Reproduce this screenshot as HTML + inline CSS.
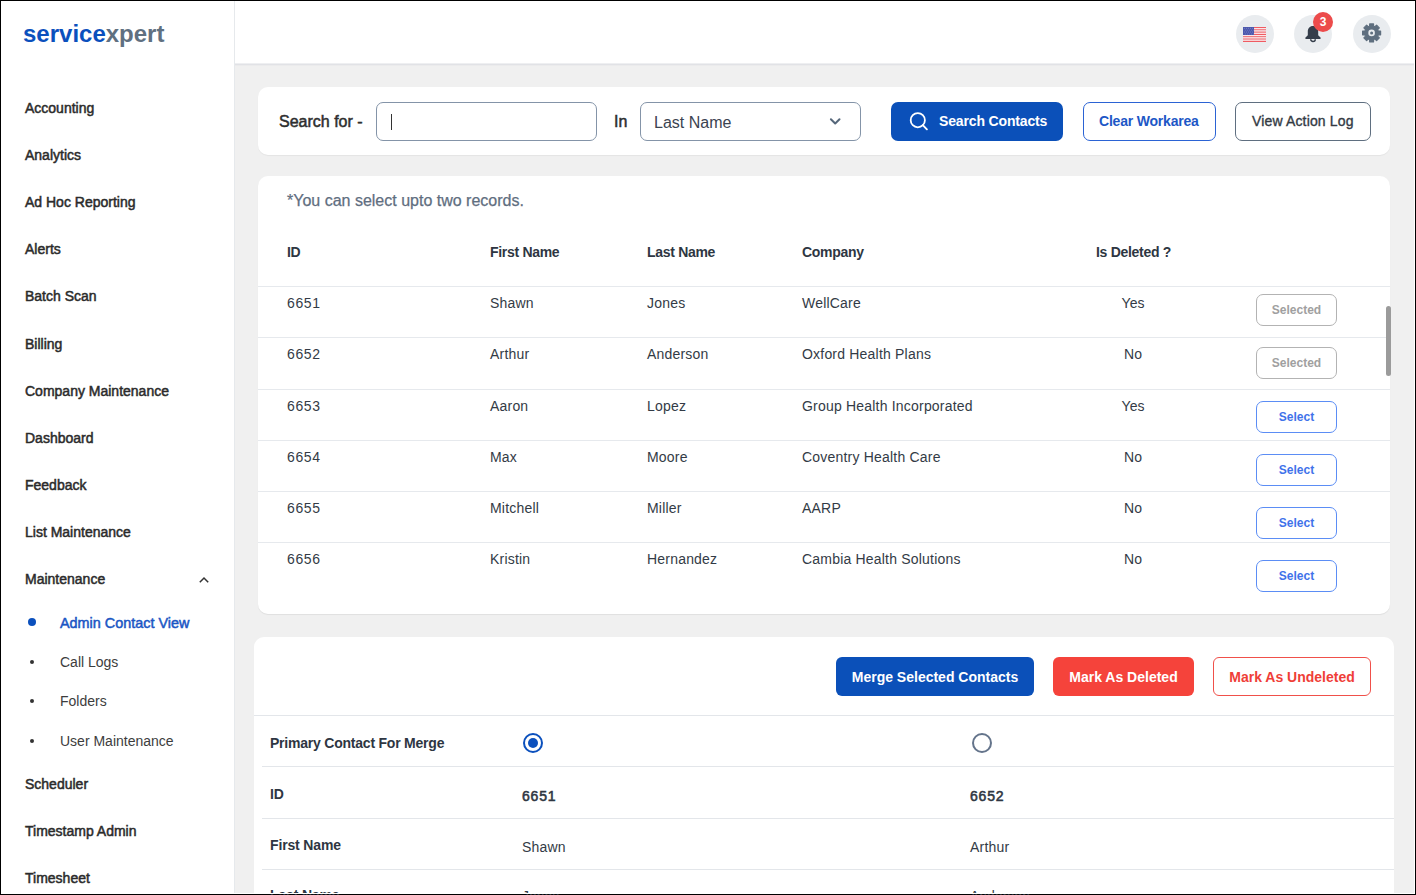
<!DOCTYPE html>
<html><head><meta charset="utf-8"><title>servicexpert</title>
<style>
html,body{margin:0;padding:0;}
body{width:1416px;height:895px;overflow:hidden;position:relative;background:#000;font-family:"Liberation Sans",sans-serif;}
.t{position:absolute;white-space:nowrap;line-height:1;font-family:"Liberation Sans",sans-serif;}
.r{position:absolute;}
</style></head><body>
<div class="r" style="left:1px;top:1px;width:1414px;height:893px;background:#fff;"></div>
<div class="r" style="left:235px;top:65px;width:1179px;height:828px;background:#f0f0f0;"></div>
<div class="r" style="left:234px;top:1px;width:1px;height:892px;background:#e6e9ec;"></div>
<div class="r" style="left:235px;top:63px;width:1179px;height:1px;background:#eeeff1;"></div>
<div class="r" style="left:235px;top:64px;width:1179px;height:1px;background:#e1e2e6;"></div>
<div class="r" style="left:235px;top:65px;width:1179px;height:1px;background:#ebebec;"></div>
<div class="t" style="left:23px;top:22px;font-size:24px;font-weight:bold;letter-spacing:0px"><span style="color:#0b50bd">service</span><span style="color:#5f7081">xpert</span></div>
<div class="t" style="left:25px;top:101px;font-size:14px;font-weight:normal;color:#2b2b2b;-webkit-text-stroke:0.5px #2b2b2b;">Accounting</div>
<div class="t" style="left:25px;top:148px;font-size:14px;font-weight:normal;color:#2b2b2b;-webkit-text-stroke:0.5px #2b2b2b;">Analytics</div>
<div class="t" style="left:25px;top:195px;font-size:14px;font-weight:normal;color:#2b2b2b;-webkit-text-stroke:0.5px #2b2b2b;">Ad Hoc Reporting</div>
<div class="t" style="left:25px;top:242px;font-size:14px;font-weight:normal;color:#2b2b2b;-webkit-text-stroke:0.5px #2b2b2b;">Alerts</div>
<div class="t" style="left:25px;top:289px;font-size:14px;font-weight:normal;color:#2b2b2b;-webkit-text-stroke:0.5px #2b2b2b;">Batch Scan</div>
<div class="t" style="left:25px;top:337px;font-size:14px;font-weight:normal;color:#2b2b2b;-webkit-text-stroke:0.5px #2b2b2b;">Billing</div>
<div class="t" style="left:25px;top:384px;font-size:14px;font-weight:normal;color:#2b2b2b;-webkit-text-stroke:0.5px #2b2b2b;">Company Maintenance</div>
<div class="t" style="left:25px;top:431px;font-size:14px;font-weight:normal;color:#2b2b2b;-webkit-text-stroke:0.5px #2b2b2b;">Dashboard</div>
<div class="t" style="left:25px;top:478px;font-size:14px;font-weight:normal;color:#2b2b2b;-webkit-text-stroke:0.5px #2b2b2b;">Feedback</div>
<div class="t" style="left:25px;top:525px;font-size:14px;font-weight:normal;color:#2b2b2b;-webkit-text-stroke:0.5px #2b2b2b;">List Maintenance</div>
<div class="t" style="left:25px;top:572px;font-size:14px;font-weight:normal;color:#2b2b2b;-webkit-text-stroke:0.5px #2b2b2b;">Maintenance</div>
<svg class="r" style="left:198px;top:575px" width="12" height="9" viewBox="0 0 12 9"><path d="M1.8 7.3 L6 3 L10.2 7.3" fill="none" stroke="#333" stroke-width="1.5"/></svg>
<div class="r" style="left:28px;top:618px;width:8px;height:8px;background:#0b50bd;border-radius:50%;"></div>
<div class="t" style="left:60px;top:616px;font-size:14.4px;font-weight:normal;color:#1a56c4;-webkit-text-stroke:0.5px #1a56c4;">Admin Contact View</div>
<div class="r" style="left:30px;top:660px;width:4px;height:4px;background:#333;border-radius:50%;"></div>
<div class="t" style="left:60px;top:655px;font-size:14px;font-weight:normal;color:#3d3d3d;">Call Logs</div>
<div class="r" style="left:30px;top:699px;width:4px;height:4px;background:#333;border-radius:50%;"></div>
<div class="t" style="left:60px;top:694px;font-size:14px;font-weight:normal;color:#3d3d3d;">Folders</div>
<div class="r" style="left:30px;top:739px;width:4px;height:4px;background:#333;border-radius:50%;"></div>
<div class="t" style="left:60px;top:734px;font-size:14px;font-weight:normal;color:#3d3d3d;">User Maintenance</div>
<div class="t" style="left:25px;top:777px;font-size:14px;font-weight:normal;color:#2b2b2b;-webkit-text-stroke:0.5px #2b2b2b;">Scheduler</div>
<div class="t" style="left:25px;top:824px;font-size:14px;font-weight:normal;color:#2b2b2b;-webkit-text-stroke:0.5px #2b2b2b;">Timestamp Admin</div>
<div class="t" style="left:25px;top:871px;font-size:14px;font-weight:normal;color:#2b2b2b;-webkit-text-stroke:0.5px #2b2b2b;">Timesheet</div>
<div class="r" style="left:1236px;top:15px;width:38px;height:38px;background:#e9ecef;border-radius:50%;"></div>
<div class="r" style="left:1294px;top:15px;width:38px;height:38px;background:#e9ecef;border-radius:50%;"></div>
<div class="r" style="left:1353px;top:15px;width:38px;height:38px;background:#e9ecef;border-radius:50%;"></div>
<svg class="r" style="left:1243px;top:27px" width="23" height="15" viewBox="0 0 23 15"><rect x="0" y="0.000" width="23" height="1.174" fill="#ef5b62"/><rect x="0" y="1.154" width="23" height="1.174" fill="#fde8ea"/><rect x="0" y="2.308" width="23" height="1.174" fill="#ef5b62"/><rect x="0" y="3.462" width="23" height="1.174" fill="#fde8ea"/><rect x="0" y="4.615" width="23" height="1.174" fill="#ef5b62"/><rect x="0" y="5.769" width="23" height="1.174" fill="#fde8ea"/><rect x="0" y="6.923" width="23" height="1.174" fill="#ef5b62"/><rect x="0" y="8.077" width="23" height="1.174" fill="#fde8ea"/><rect x="0" y="9.231" width="23" height="1.174" fill="#ef5b62"/><rect x="0" y="10.385" width="23" height="1.174" fill="#fde8ea"/><rect x="0" y="11.538" width="23" height="1.174" fill="#ef5b62"/><rect x="0" y="12.692" width="23" height="1.174" fill="#fde8ea"/><rect x="0" y="13.846" width="23" height="1.174" fill="#ef5b62"/><rect x="0" y="0" width="11" height="8" fill="#4c58ad"/><circle cx="1.30" cy="1.20" r="0.45" fill="#9aa3d6"/><circle cx="3.40" cy="1.20" r="0.45" fill="#9aa3d6"/><circle cx="5.50" cy="1.20" r="0.45" fill="#9aa3d6"/><circle cx="7.60" cy="1.20" r="0.45" fill="#9aa3d6"/><circle cx="9.70" cy="1.20" r="0.45" fill="#9aa3d6"/><circle cx="2.30" cy="3.10" r="0.45" fill="#9aa3d6"/><circle cx="4.40" cy="3.10" r="0.45" fill="#9aa3d6"/><circle cx="6.50" cy="3.10" r="0.45" fill="#9aa3d6"/><circle cx="8.60" cy="3.10" r="0.45" fill="#9aa3d6"/><circle cx="10.70" cy="3.10" r="0.45" fill="#9aa3d6"/><circle cx="1.30" cy="5.00" r="0.45" fill="#9aa3d6"/><circle cx="3.40" cy="5.00" r="0.45" fill="#9aa3d6"/><circle cx="5.50" cy="5.00" r="0.45" fill="#9aa3d6"/><circle cx="7.60" cy="5.00" r="0.45" fill="#9aa3d6"/><circle cx="9.70" cy="5.00" r="0.45" fill="#9aa3d6"/><circle cx="2.30" cy="6.90" r="0.45" fill="#9aa3d6"/><circle cx="4.40" cy="6.90" r="0.45" fill="#9aa3d6"/><circle cx="6.50" cy="6.90" r="0.45" fill="#9aa3d6"/><circle cx="8.60" cy="6.90" r="0.45" fill="#9aa3d6"/><circle cx="10.70" cy="6.90" r="0.45" fill="#9aa3d6"/></svg>
<svg class="r" style="left:1304px;top:24px" width="18" height="20" viewBox="0 0 18 20"><path d="M9 2C5.6 2 3.8 4.6 3.8 7.6V11.2L1.5 13.5C1.1 13.9 1.3 15 2 15H16C16.7 15 16.9 13.9 16.5 13.5L14.2 11.2V7.6C14.2 4.6 12.4 2 9 2Z" fill="#343d4a"/><path d="M6.7 15.2A2.3 2.3 0 0 0 11.3 15.2" fill="none" stroke="#343d4a" stroke-width="1.5"/></svg>
<div class="r" style="left:1313px;top:12px;width:20px;height:20px;background:#ec4b4b;border-radius:50%;"></div>
<div class="t" style="left:1023px;width:600px;text-align:center;top:16px;font-size:12px;font-weight:bold;color:#fff;">3</div>
<svg class="r" style="left:1361px;top:22px" width="22" height="22" viewBox="0 0 22 22"><path fill="#5f6f7f" stroke="#5f6f7f" stroke-width="1.2" stroke-linejoin="round" d="M8.58 4.30 L8.69 1.90 L12.51 1.90 L12.62 4.30 L13.84 4.81 L15.61 3.18 L18.32 5.89 L16.69 7.66 L17.20 8.88 L19.60 8.99 L19.60 12.81 L17.20 12.92 L16.69 14.14 L18.32 15.91 L15.61 18.62 L13.84 16.99 L12.62 17.50 L12.51 19.90 L8.69 19.90 L8.58 17.50 L7.36 16.99 L5.59 18.62 L2.88 15.91 L4.51 14.14 L4.00 12.92 L1.60 12.81 L1.60 8.99 L4.00 8.88 L4.51 7.66 L2.88 5.89 L5.59 3.18 L7.36 4.81Z"/><circle cx="10.6" cy="10.9" r="3.3" fill="#e9ecef"/><circle cx="10.6" cy="10.9" r="1.5" fill="#5f6f7f"/></svg>
<div class="r" style="left:258px;top:87px;width:1132px;height:68px;background:#fff;border-radius:10px;box-shadow:0 1px 1px rgba(0,0,0,0.05);"></div>
<div class="t" style="left:279px;top:114px;font-size:16px;font-weight:normal;color:#2e2e2e;-webkit-text-stroke:0.5px #2e2e2e;">Search for -</div>
<div class="r" style="left:376px;top:102px;width:221px;height:39px;background:#fff;border:1px solid #8494a8;border-radius:7px;box-sizing:border-box;"></div>
<div class="r" style="left:391px;top:114px;width:1px;height:16px;background:#333;"></div>
<div class="t" style="left:614px;top:114px;font-size:16px;font-weight:normal;color:#2e2e2e;-webkit-text-stroke:0.5px #2e2e2e;">In</div>
<div class="r" style="left:640px;top:102px;width:221px;height:39px;background:#fff;border:1px solid #8494a8;border-radius:7px;box-sizing:border-box;"></div>
<div class="t" style="left:654px;top:115px;font-size:16px;font-weight:normal;color:#3b4350;">Last Name</div>
<svg class="r" style="left:829px;top:117px" width="13" height="9" viewBox="0 0 13 9"><path d="M1.9 2.2 L6.2 6.5 L10.5 2.2" fill="none" stroke="#56677a" stroke-width="2" stroke-linecap="round" stroke-linejoin="round"/></svg>
<div class="r" style="left:891px;top:102px;width:172px;height:39px;background:#0b50b9;border-radius:7px;"></div>
<svg class="r" style="left:908px;top:110px" width="22" height="22" viewBox="0 0 22 22"><circle cx="9.8" cy="10.2" r="7.1" fill="none" stroke="#fff" stroke-width="1.8"/><path d="M14.8 15.2 L18.9 19.3" stroke="#fff" stroke-width="1.9" stroke-linecap="round"/></svg>
<div class="t" style="left:939px;top:114px;font-size:14px;font-weight:bold;color:#fff;letter-spacing:-0.15px;">Search Contacts</div>
<div class="r" style="left:1083px;top:102px;width:133px;height:39px;background:#fff;border:1px solid #2b63d4;border-radius:7px;box-sizing:border-box;"></div>
<div class="t" style="left:1099px;top:114px;font-size:14px;font-weight:bold;color:#1d57c6;letter-spacing:-0.2px;">Clear Workarea</div>
<div class="r" style="left:1235px;top:102px;width:136px;height:39px;background:#fff;border:1px solid #5f6f80;border-radius:7px;box-sizing:border-box;"></div>
<div class="t" style="left:1252px;top:114px;font-size:14px;font-weight:normal;color:#333a44;letter-spacing:0.15px;-webkit-text-stroke:0.35px #333a44;">View Action Log</div>
<div class="r" style="left:258px;top:176px;width:1132px;height:438px;background:#fff;border-radius:10px;box-shadow:0 1px 1px rgba(0,0,0,0.07);"></div>
<div class="t" style="left:287px;top:193px;font-size:16px;font-weight:normal;color:#5f6e80;-webkit-text-stroke:0.25px #5f6e80;">*You can select upto two records.</div>
<div class="t" style="left:287px;top:245px;font-size:14px;font-weight:bold;color:#2e3642;letter-spacing:-0.3px;">ID</div>
<div class="t" style="left:490px;top:245px;font-size:14px;font-weight:bold;color:#2e3642;letter-spacing:-0.3px;">First Name</div>
<div class="t" style="left:647px;top:245px;font-size:14px;font-weight:bold;color:#2e3642;letter-spacing:-0.3px;">Last Name</div>
<div class="t" style="left:802px;top:245px;font-size:14px;font-weight:bold;color:#2e3642;letter-spacing:-0.3px;">Company</div>
<div class="t" style="left:1096px;top:245px;font-size:14px;font-weight:bold;color:#2e3642;letter-spacing:-0.3px;">Is Deleted ?</div>
<div class="r" style="left:258px;top:286px;width:1132px;height:1px;background:#e6e9ed;"></div>
<div class="t" style="left:287px;top:296px;font-size:14px;font-weight:normal;color:#333b46;letter-spacing:0.6px;">6651</div>
<div class="t" style="left:490px;top:296px;font-size:14px;font-weight:normal;color:#333b46;letter-spacing:0.2px;">Shawn</div>
<div class="t" style="left:647px;top:296px;font-size:14px;font-weight:normal;color:#333b46;letter-spacing:0.2px;">Jones</div>
<div class="t" style="left:802px;top:296px;font-size:14px;font-weight:normal;color:#333b46;letter-spacing:0.2px;">WellCare</div>
<div class="t" style="left:833px;width:600px;text-align:center;top:296px;font-size:14px;font-weight:normal;color:#333b46;">Yes</div>
<div class="r" style="left:1256px;top:294px;width:81px;height:32px;border:1px solid #b3b3b3;border-radius:7px;box-sizing:border-box;background:#fff;"></div>
<div class="t" style="left:996.5px;width:600px;text-align:center;top:304px;font-size:12px;font-weight:bold;color:#a0a0a0;">Selected</div>
<div class="r" style="left:258px;top:337px;width:1132px;height:1px;background:#e6e9ed;"></div>
<div class="t" style="left:287px;top:347px;font-size:14px;font-weight:normal;color:#333b46;letter-spacing:0.6px;">6652</div>
<div class="t" style="left:490px;top:347px;font-size:14px;font-weight:normal;color:#333b46;letter-spacing:0.2px;">Arthur</div>
<div class="t" style="left:647px;top:347px;font-size:14px;font-weight:normal;color:#333b46;letter-spacing:0.2px;">Anderson</div>
<div class="t" style="left:802px;top:347px;font-size:14px;font-weight:normal;color:#333b46;letter-spacing:0.2px;">Oxford Health Plans</div>
<div class="t" style="left:833px;width:600px;text-align:center;top:347px;font-size:14px;font-weight:normal;color:#333b46;">No</div>
<div class="r" style="left:1256px;top:347px;width:81px;height:32px;border:1px solid #b3b3b3;border-radius:7px;box-sizing:border-box;background:#fff;"></div>
<div class="t" style="left:996.5px;width:600px;text-align:center;top:357px;font-size:12px;font-weight:bold;color:#a0a0a0;">Selected</div>
<div class="r" style="left:258px;top:389px;width:1132px;height:1px;background:#e6e9ed;"></div>
<div class="t" style="left:287px;top:399px;font-size:14px;font-weight:normal;color:#333b46;letter-spacing:0.6px;">6653</div>
<div class="t" style="left:490px;top:399px;font-size:14px;font-weight:normal;color:#333b46;letter-spacing:0.2px;">Aaron</div>
<div class="t" style="left:647px;top:399px;font-size:14px;font-weight:normal;color:#333b46;letter-spacing:0.2px;">Lopez</div>
<div class="t" style="left:802px;top:399px;font-size:14px;font-weight:normal;color:#333b46;letter-spacing:0.2px;">Group Health Incorporated</div>
<div class="t" style="left:833px;width:600px;text-align:center;top:399px;font-size:14px;font-weight:normal;color:#333b46;">Yes</div>
<div class="r" style="left:1256px;top:401px;width:81px;height:32px;border:1px solid #5b8df5;border-radius:7px;box-sizing:border-box;background:#fff;"></div>
<div class="t" style="left:996.5px;width:600px;text-align:center;top:411px;font-size:12px;font-weight:bold;color:#3f73ea;">Select</div>
<div class="r" style="left:258px;top:440px;width:1132px;height:1px;background:#e6e9ed;"></div>
<div class="t" style="left:287px;top:450px;font-size:14px;font-weight:normal;color:#333b46;letter-spacing:0.6px;">6654</div>
<div class="t" style="left:490px;top:450px;font-size:14px;font-weight:normal;color:#333b46;letter-spacing:0.2px;">Max</div>
<div class="t" style="left:647px;top:450px;font-size:14px;font-weight:normal;color:#333b46;letter-spacing:0.2px;">Moore</div>
<div class="t" style="left:802px;top:450px;font-size:14px;font-weight:normal;color:#333b46;letter-spacing:0.2px;">Coventry Health Care</div>
<div class="t" style="left:833px;width:600px;text-align:center;top:450px;font-size:14px;font-weight:normal;color:#333b46;">No</div>
<div class="r" style="left:1256px;top:454px;width:81px;height:32px;border:1px solid #5b8df5;border-radius:7px;box-sizing:border-box;background:#fff;"></div>
<div class="t" style="left:996.5px;width:600px;text-align:center;top:464px;font-size:12px;font-weight:bold;color:#3f73ea;">Select</div>
<div class="r" style="left:258px;top:491px;width:1132px;height:1px;background:#e6e9ed;"></div>
<div class="t" style="left:287px;top:501px;font-size:14px;font-weight:normal;color:#333b46;letter-spacing:0.6px;">6655</div>
<div class="t" style="left:490px;top:501px;font-size:14px;font-weight:normal;color:#333b46;letter-spacing:0.2px;">Mitchell</div>
<div class="t" style="left:647px;top:501px;font-size:14px;font-weight:normal;color:#333b46;letter-spacing:0.2px;">Miller</div>
<div class="t" style="left:802px;top:501px;font-size:14px;font-weight:normal;color:#333b46;letter-spacing:0.2px;">AARP</div>
<div class="t" style="left:833px;width:600px;text-align:center;top:501px;font-size:14px;font-weight:normal;color:#333b46;">No</div>
<div class="r" style="left:1256px;top:507px;width:81px;height:32px;border:1px solid #5b8df5;border-radius:7px;box-sizing:border-box;background:#fff;"></div>
<div class="t" style="left:996.5px;width:600px;text-align:center;top:517px;font-size:12px;font-weight:bold;color:#3f73ea;">Select</div>
<div class="r" style="left:258px;top:542px;width:1132px;height:1px;background:#e6e9ed;"></div>
<div class="t" style="left:287px;top:552px;font-size:14px;font-weight:normal;color:#333b46;letter-spacing:0.6px;">6656</div>
<div class="t" style="left:490px;top:552px;font-size:14px;font-weight:normal;color:#333b46;letter-spacing:0.2px;">Kristin</div>
<div class="t" style="left:647px;top:552px;font-size:14px;font-weight:normal;color:#333b46;letter-spacing:0.2px;">Hernandez</div>
<div class="t" style="left:802px;top:552px;font-size:14px;font-weight:normal;color:#333b46;letter-spacing:0.2px;">Cambia Health Solutions</div>
<div class="t" style="left:833px;width:600px;text-align:center;top:552px;font-size:14px;font-weight:normal;color:#333b46;">No</div>
<div class="r" style="left:1256px;top:560px;width:81px;height:32px;border:1px solid #5b8df5;border-radius:7px;box-sizing:border-box;background:#fff;"></div>
<div class="t" style="left:996.5px;width:600px;text-align:center;top:570px;font-size:12px;font-weight:bold;color:#3f73ea;">Select</div>
<div class="r" style="left:1386px;top:306px;width:5px;height:70px;background:#9b9b9b;border-radius:3px;"></div>
<div class="r" style="left:254px;top:637px;width:1140px;height:257px;background:#fff;border-radius:10px 10px 0 0;"></div>
<div class="r" style="left:836px;top:657px;width:198px;height:39px;background:#0b50b9;border-radius:6px;"></div>
<div class="t" style="left:635px;width:600px;text-align:center;top:670px;font-size:14px;font-weight:bold;color:#fff;letter-spacing:0px;">Merge Selected Contacts</div>
<div class="r" style="left:1053px;top:657px;width:141px;height:39px;background:#f5433b;border-radius:6px;"></div>
<div class="t" style="left:823.5px;width:600px;text-align:center;top:670px;font-size:14px;font-weight:bold;color:#fff;letter-spacing:0px;">Mark As Deleted</div>
<div class="r" style="left:1213px;top:657px;width:158px;height:39px;background:#fff;border:1px solid #f0504a;border-radius:6px;box-sizing:border-box;"></div>
<div class="t" style="left:992px;width:600px;text-align:center;top:670px;font-size:14px;font-weight:bold;color:#ef3e38;letter-spacing:0px;">Mark As Undeleted</div>
<div class="r" style="left:254px;top:715px;width:1140px;height:1px;background:#e3e6ea;"></div>
<div class="r" style="left:262px;top:766px;width:1132px;height:1px;background:#e3e6ea;"></div>
<div class="r" style="left:262px;top:818px;width:1132px;height:1px;background:#e3e6ea;"></div>
<div class="r" style="left:262px;top:869px;width:1132px;height:1px;background:#e3e6ea;"></div>
<div class="t" style="left:270px;top:736px;font-size:14px;font-weight:bold;color:#2e3642;letter-spacing:-0.22px;">Primary Contact For Merge</div>
<div class="r" style="left:523px;top:733px;width:20px;height:20px;border:2px solid #0b50bd;border-radius:50%;box-sizing:border-box;background:#fff;"></div>
<div class="r" style="left:528px;top:738px;width:10px;height:10px;background:#0b50bd;border-radius:50%;"></div>
<div class="r" style="left:972px;top:733px;width:20px;height:20px;border:2px solid #64748b;border-radius:50%;box-sizing:border-box;background:#fff;"></div>
<div class="t" style="left:270px;top:787px;font-size:14px;font-weight:bold;color:#2e3642;letter-spacing:-0.2px;">ID</div>
<div class="t" style="left:522px;top:789px;font-size:14px;font-weight:normal;color:#2e3642;letter-spacing:0.8px;-webkit-text-stroke:0.55px #2e3642;">6651</div>
<div class="t" style="left:970px;top:789px;font-size:14px;font-weight:normal;color:#2e3642;letter-spacing:0.8px;-webkit-text-stroke:0.55px #2e3642;">6652</div>
<div class="t" style="left:270px;top:838px;font-size:14px;font-weight:bold;color:#2e3642;letter-spacing:-0.15px;">First Name</div>
<div class="t" style="left:522px;top:840px;font-size:14px;font-weight:normal;color:#333b46;letter-spacing:0.2px;">Shawn</div>
<div class="t" style="left:970px;top:840px;font-size:14px;font-weight:normal;color:#333b46;letter-spacing:0.2px;">Arthur</div>
<div class="t" style="left:270px;top:888px;font-size:14px;font-weight:bold;color:#2e3642;letter-spacing:-0.15px;">Last Name</div>
<div class="t" style="left:522px;top:889px;font-size:14px;font-weight:normal;color:#333b46;">Jones</div>
<div class="t" style="left:970px;top:889px;font-size:14px;font-weight:normal;color:#333b46;">Anderson</div>
<div class="r" style="left:1px;top:893px;width:1414px;height:1px;background:#fff;"></div>
<div class="r" style="left:1414px;top:1px;width:1px;height:893px;background:#fff;"></div>
</body></html>
